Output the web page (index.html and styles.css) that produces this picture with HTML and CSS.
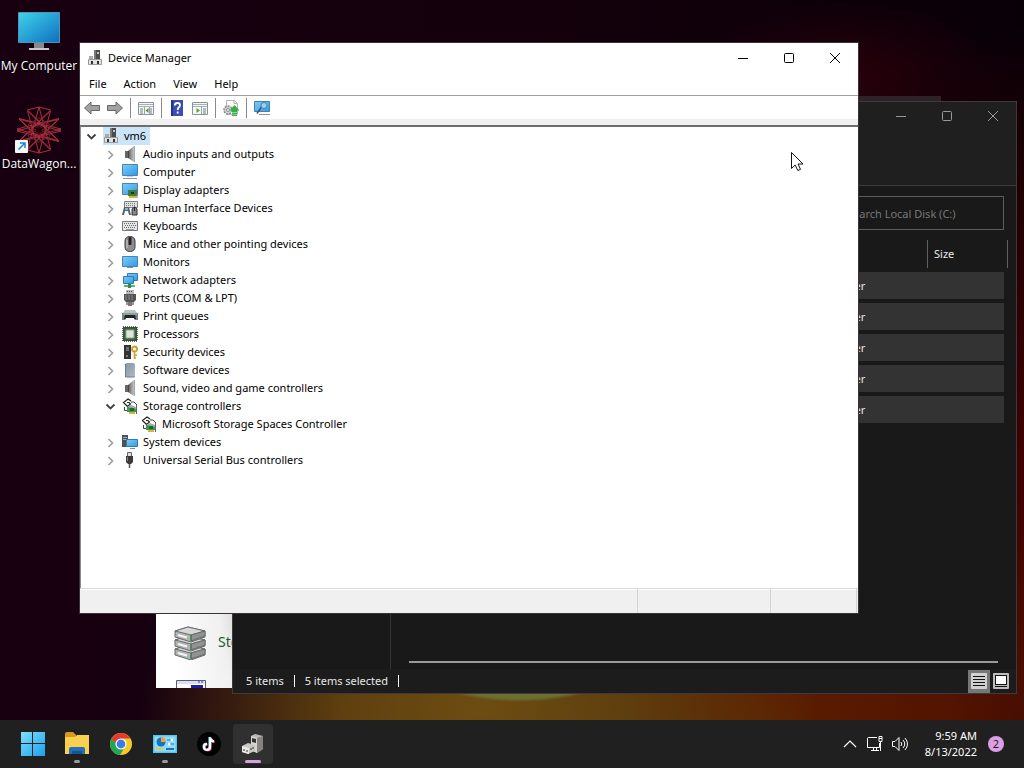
FILE: index.html
```html
<!DOCTYPE html>
<html lang="en">
	<head>
		<meta charset="UTF-8">
		<title>Device Manager</title>
		<link rel="stylesheet" href="styles.css">
	</head>
	<body>
		<svg class="sprite" aria-hidden="true">
			<defs>
				<linearGradient id="screen" x1="0" y1="0" x2="1" y2="1">
					<stop offset="0" stop-color="#7ecbfa"/><stop offset="1" stop-color="#2c9ce8"/>
				</linearGradient>
				<linearGradient id="desk" x1="0" y1="0" x2="1" y2="1">
					<stop offset="0" stop-color="#3fd3ea"/><stop offset="1" stop-color="#0f6fc0"/>
				</linearGradient>
				<linearGradient id="metal" x1="0" y1="0" x2="1" y2="0">
					<stop offset="0" stop-color="#5c5c5c"/><stop offset="1" stop-color="#c4c4c4"/>
				</linearGradient>
				<linearGradient id="tower" x1="0" y1="0" x2="1" y2="1">
					<stop offset="0" stop-color="#8495a1"/><stop offset="1" stop-color="#aebcc6"/>
				</linearGradient>
				<linearGradient id="winblue" x1="0" y1="0" x2="1" y2="1">
					<stop offset="0" stop-color="#7fe0fc"/><stop offset="1" stop-color="#1aa0ec"/>
				</linearGradient>
			</defs>
			<symbol id="i-right" viewBox="0 0 16 16"><path d="M5.500 5l4 4-4 4" fill="none" stroke="#a0a0a0" stroke-width="1.700"/></symbol>
			<symbol id="i-down" viewBox="0 0 16 16"><path d="M3.500 6.500l4 4 4-4" fill="none" stroke="#404040" stroke-width="1.800"/></symbol>
			<symbol id="i-devmgr" viewBox="0 0 16 16">
				<path d="M7 0h6v9H7z" fill="#4a4a4a"/><path d="M7 0h2v9H7z" fill="#777"/><path d="M10 2h2v2h-2z" fill="#c4c4c4"/>
				<path d="M2 6h4v3H2z" fill="#aaa"/>
				<path d="M1.500 9.500h13v5h-13z" fill="#e2e2e2" stroke="#999"/><path d="M4 11h2v3H4zM10 11h2v3h-2z" fill="#333"/>
			</symbol>
			<symbol id="i-audio" viewBox="0 0 16 16">
				<path d="M3 5h3v7H3z" fill="#666"/><path d="M6 5l6-5v16l-6-4z" fill="url(#metal)"/><path d="M6.500 5v7" stroke="#444"/><path d="M12.500 0v16" stroke="#aaa"/>
			</symbol>
			<symbol id="i-computer" viewBox="0 0 16 16">
				<path d="M.5.5h15v11H.5z" fill="url(#screen)" stroke="#4d84ab"/><path d="M5 12.500h6" stroke="#ccc"/><path d="M1 14.500h14" stroke="#8c9aa5"/>
			</symbol>
			<symbol id="i-display" viewBox="0 0 16 16">
				<path d="M.5 1.500h15v11H.5z" fill="url(#screen)" stroke="#4d84ab"/>
				<path d="M6 8h9v6H6z" fill="#3f7d3d"/><path d="M7 14h7v2H7z" fill="#d5b540"/><path d="M9 10h3v2H9z" fill="#20331f"/><path d="M15 7v9" stroke="#707070"/>
			</symbol>
			<symbol id="i-hid" viewBox="0 0 16 16">
				<path d="M2.500 1.500h13v6h-13z" fill="#e1e1e1" stroke="#808080"/><path d="M4 3.500h10M4 5.500h10" stroke="#777" stroke-dasharray="1 1"/>
				<path d="M0 15l2-8h5l2 8H7l-1-4H3l-1 4z" fill="#56646e"/><path d="M3 8h3v2H3z" fill="#6cc0dd"/>
				<path d="M10 15V9q2.500-4 5 0v6z" fill="#888" stroke="#333"/><path d="M12.500 7v4" stroke="#222"/>
			</symbol>
			<symbol id="i-keyboard" viewBox="0 0 16 16">
				<path d="M.5 3.500h15v9H.5z" fill="#e6e6e6" stroke="#7a7a7a"/><path d="M2 5.500h12M3 7.500h11M2 9.500h12" stroke="#6c6c6c" stroke-dasharray="1 1"/><path d="M4 11.500h8" stroke="#999"/>
			</symbol>
			<symbol id="i-mouse" viewBox="0 0 16 16">
				<rect x="3" y=".5" width="10" height="15" rx="4.500" fill="#8e8e8e" stroke="#3b3b3b"/><rect x="6.500" y="1" width="3" height="8" rx="1" fill="#222"/><path d="M5 4v8" stroke="#ccc"/>
			</symbol>
			<symbol id="i-monitor" viewBox="0 0 16 16">
				<path d="M.5 2.500h15v10H.5z" fill="url(#screen)" stroke="#4d84ab"/><path d="M5 13.500h6" stroke="#8a8a8a"/>
			</symbol>
			<symbol id="i-network" viewBox="0 0 16 16">
				<path d="M5.500 1.500h10v7h-10z" fill="url(#screen)" stroke="#3b79a5"/><path d="M1.500 4.500h10v7h-10z" fill="url(#screen)" stroke="#3b79a5"/>
				<path d="M2 13h11v2H2z" fill="#54b968"/><path d="M6 12h3v4H6z" fill="#2f8b48"/>
			</symbol>
			<symbol id="i-port" viewBox="0 0 16 16">
				<path d="M4 0h8v4H4z" fill="#bbb"/><path d="M5 1.500h6" stroke="#555" stroke-dasharray="1 1"/><path d="M2 4h12v6l-2 2H4l-2-2z" fill="#555"/><path d="M4 5v5M7 5v5M10 5v5" stroke="#888"/><path d="M6 12h4v4H6z" fill="#777"/><path d="M5 12v3M11 12v3" stroke="#333"/>
			</symbol>
			<symbol id="i-printer" viewBox="0 0 16 16">
				<path d="M3 2h10l2 3H1z" fill="#b8c4c2"/><path d="M0 5h16v7H0z" fill="#728583"/><path d="M3 7h10l1 4H2z" fill="#222"/><path d="M4 10h8l1 3H3z" fill="#fff"/><path d="M1 6h14" stroke="#a9bab7"/>
			</symbol>
			<symbol id="i-cpu" viewBox="0 0 16 16">
				<path d="M1 1h14v14H1z" fill="#3f5c3f" stroke="#2c432c" stroke-width="1.500" stroke-dasharray="1 1"/><path d="M4 4h8v8H4z" fill="#dfe6dd" stroke="#8ea58b"/>
			</symbol>
			<symbol id="i-security" viewBox="0 0 16 16">
				<path d="M2 1h7v14H2z" fill="#333"/><path d="M4 4h3M4 6h3" stroke="#aaa"/><path d="M4 11h2v2H4z" fill="#777"/>
				<circle cx="12.500" cy="5" r="2.500" fill="none" stroke="#c9a227" stroke-width="1.800"/><path d="M12.500 7v8M12 11h3M12 14h2" stroke="#c9a227" stroke-width="1.500"/>
			</symbol>
			<symbol id="i-software" viewBox="0 0 16 16">
				<path d="M3 2l2-1h7l1 2v12H3z" fill="url(#tower)"/><path d="M3.500 2v13h9" fill="none" stroke="#6b7c88"/>
			</symbol>
			<symbol id="i-storage" viewBox="0 0 16 16">
				<path d="M9 3L6 1 1.500 4.500 5.500 8.500 8.500 6 7 4.500H5" fill="none" stroke="#222" stroke-width="1.200"/>
				<path d="M2.500 9v3.500H5M9 4h3l3 3" fill="none" stroke="#444"/>
				<path d="M5 9h9v5H5z" fill="#3e9850"/><path d="M5 9l4-2 5 2v2z" fill="#9ab0a4"/><path d="M8 10h4v3H8z" fill="#1f6a30"/><path d="M7 14h6v2H7z" fill="#d5b540"/><path d="M14.500 7v9" stroke="#666"/>
			</symbol>
			<symbol id="i-system" viewBox="0 0 16 16">
				<path d="M0 1h6v12H0z" fill="#4a535a"/><path d="M1 3.500h4M1 5.500h4" stroke="#aab"/><path d="M4.500 5.500h11v7h-11z" fill="url(#screen)" stroke="#3b79a5"/><path d="M8 14.500h5" stroke="#8a8a8a"/>
			</symbol>
			<symbol id="i-usb" viewBox="0 0 16 16">
				<path d="M5.500.5h4v4h-4z" fill="#ddd" stroke="#666"/><path d="M4 4h7v6l-2 2H6l-2-2z" fill="#3a3a3a"/><path d="M5.500 5v4" stroke="#888"/><path d="M7.500 12v4" stroke="#555" stroke-width="1.500"/>
			</symbol>
			<symbol id="i-min" viewBox="0 0 12 12"><path d="M1 6.500h10" stroke="currentColor"/></symbol>
			<symbol id="i-max" viewBox="0 0 12 12"><rect x="1.500" y="1.500" width="9" height="9" rx="1" fill="none" stroke="currentColor"/></symbol>
			<symbol id="i-close" viewBox="0 0 12 12"><path d="M1 1l10 10M11 1L1 11" stroke="currentColor"/></symbol>
		</svg>

		<main class="desktop">
			<a class="shortcut" href="#">
				<svg class="shortcut-icon" viewBox="0 0 48 48">
					<path d="M3.500 4.500h41v30h-41z" fill="url(#desk)" stroke="#5195b5"/>
					<path d="M19 35h10v5H19z" fill="#87898c"/><path d="M14 40h20v2H14z" fill="#c9c9c9"/>
				</svg>
				<span>My Computer</span>
			</a>
			<a class="shortcut" href="#">
				<svg class="shortcut-icon" viewBox="0 0 48 48">
					<g fill="none" stroke="#a8323c">
						<g id="star"><path d="M24 1L35.500 43 4 12.500 46 23 4 35 35.500 4z"/><path d="M24 1L12.500 43 44 12.500 2 23 44 35 12.500 4z"/></g>
						<use href="#star" transform="rotate(180 24 24)"/>
					</g>
					<g fill="none" stroke="#7c1f2c">
						<circle cx="24" cy="17" r="5"/><circle cx="30" cy="21" r="5"/><circle cx="30" cy="28" r="5"/><circle cx="24" cy="31" r="5"/><circle cx="18" cy="28" r="5"/><circle cx="18" cy="21" r="5"/>
					</g>
					<circle cx="24" cy="24" r="3" fill="#210008"/>
					<rect x="0" y="34" width="13" height="13" rx="1" fill="#f8f8f8"/>
					<path d="M3.500 43.500l6-6M5 37h5v5" fill="none" stroke="#1784d8" stroke-width="1.500"/>
				</svg>
				<span>DataWagon...</span>
			</a>

			<section class="window panel" aria-label="Control Panel">
				<div class="panel-title"></div>
				<div class="panel-body">
					<a class="panel-item" href="#">
						<svg class="panel-icon" viewBox="0 0 36 36">
							<g id="drive" fill="#b0b4b2" stroke="#666b69">
								<path d="M2 25l13-4 17 4v6l-14 5-16-5z"/><path d="M2 25l16 4 14-4-17-4z" fill="#d6d8d7"/><path d="M18 29v6l14-5v-5z" fill="#8f9391"/><path d="M18 29v6" stroke="#3b7a40"/><path d="M5 29l9 2.500" stroke="#f4f4f4" stroke-width="2"/>
							</g>
							<use href="#drive" y="-9"/><use href="#drive" y="-18"/>
						</svg>
						<span>Storage Spaces</span>
					</a>
					<a class="panel-item" href="#" aria-label="Taskbar">
						<svg class="panel-icon" viewBox="0 0 36 36">
							<path d="M3.500 4.500h29v26h-29z" fill="#fff" stroke="#555b80"/><path d="M4 5h28v3H4z" fill="#dcdeea"/><path d="M18 9h12v12H18z" fill="#1e1ea0"/><path d="M26 5v2M29 5v2" stroke="#445"/>
						</svg>
					</a>
				</div>
			</section>

			<section class="window explorer" aria-label="Local Disk (C:)">
				<header class="explorer-top">
					<div class="win-buttons">
						<button aria-label="Minimize"><svg><use href="#i-min"/></svg></button>
						<button aria-label="Maximize"><svg><use href="#i-max"/></svg></button>
						<button aria-label="Close"><svg><use href="#i-close"/></svg></button>
					</div>
				</header>
				<div class="explorer-search">
					<input type="search" placeholder="Search Local Disk (C:)" aria-label="Search Local Disk (C:)">
				</div>
				<div class="explorer-main">
					<nav class="explorer-nav"></nav>
					<div class="explorer-list">
						<table>
							<thead>
								<tr><th></th><th class="col-type"></th><th class="col-size">Size</th></tr>
							</thead>
							<tbody>
								<tr><td></td><td>File folder</td><td></td></tr>
								<tr><td></td><td>File folder</td><td></td></tr>
								<tr><td></td><td>File folder</td><td></td></tr>
								<tr><td></td><td>File folder</td><td></td></tr>
								<tr><td></td><td>File folder</td><td></td></tr>
							</tbody>
						</table>
						<div class="scrollbar"></div>
					</div>
				</div>
				<footer class="explorer-status">
					<span class="count">5 items</span>
					<span class="count">5 items selected</span>
					<div class="views">
						<button class="view active" aria-label="Details">
							<svg viewBox="0 0 16 16"><rect width="16" height="16" rx="1" fill="#d0d0d0"/><path d="M2 3.500h12M2 6.500h12M2 9.500h12M2 12.500h12" stroke="#111"/></svg>
						</button>
						<button class="view" aria-label="Large icons">
							<svg viewBox="0 0 16 16"><rect width="16" height="16" rx="1" fill="#bcbcbc"/><rect x="2.500" y="2.500" width="11" height="9" fill="#fff" stroke="#111"/><path d="M2 13.500h12" stroke="#111"/></svg>
						</button>
					</div>
				</footer>
			</section>

			<section class="window devmgr" aria-label="Device Manager">
				<header class="titlebar">
					<svg class="icon"><use href="#i-devmgr"/></svg>
					<h1>Device Manager</h1>
					<div class="win-buttons">
						<button aria-label="Minimize"><svg><use href="#i-min"/></svg></button>
						<button aria-label="Maximize"><svg><use href="#i-max"/></svg></button>
						<button aria-label="Close"><svg><use href="#i-close"/></svg></button>
					</div>
				</header>
				<nav class="menubar">
					<button>File</button><button>Action</button><button>View</button><button>Help</button>
				</nav>
				<div class="toolbar">
					<button aria-label="Back"><svg viewBox="0 0 18 18"><path d="M1.500 9L8 3v3.500h8.500v5H8V15z" fill="#a2a2a2" stroke="#666"/></svg></button>
					<button aria-label="Forward"><svg viewBox="0 0 18 18"><path d="M16.500 9L10 3v3.500H1.500v5H10V15z" fill="#a2a2a2" stroke="#666"/></svg></button>
					<span class="sep"></span>
					<button aria-label="Show console tree"><svg viewBox="0 0 18 18">
						<path d="M1.500 3.500h15v12h-15z" fill="#f7f8f6" stroke="#89939a"/><path d="M2 5.500h14M2 7.500h14" stroke="#a7b2b8"/><path d="M3 10h3M3 12h3M3 14h3M13 10h2M13 12h2M13 14h2" stroke="#6f8089"/><path d="M7.500 8v7M12.500 8v7" stroke="#9aa5ab"/><path d="M11.500 9v5L8.500 11.500z" fill="#5b8f3a"/>
					</svg></button>
					<span class="sep"></span>
					<button aria-label="Help"><svg viewBox="0 0 18 18">
						<path d="M3 1h12v16H3z" fill="#3b4eb4"/><path d="M3 1h2v16H3z" fill="#24347f"/><path d="M6.800 6.500q.2-2.500 2.700-2.500t2.500 2.200q0 1.300-1.300 2.300-1 .8-1 2.500M9.700 12.500v2" fill="none" stroke="#fff" stroke-width="1.800"/>
					</svg></button>
					<button aria-label="Properties"><svg viewBox="0 0 18 18">
						<path d="M1.500 3.500h15v12h-15z" fill="#f7f8f6" stroke="#89939a"/><path d="M2 5.500h14M2 7.500h14" stroke="#a7b2b8"/><path d="M10.500 8v7" stroke="#9aa5ab"/><path d="M12 10h3M12 12h3M12 14h3" stroke="#6f8089"/><path d="M5.500 9v5L9 11.500z" fill="#5b9f3a"/>
					</svg></button>
					<span class="sep"></span>
					<button aria-label="Scan for hardware changes"><svg viewBox="0 0 18 18">
						<path d="M4.500 1.500h8l3 3v11h-11z" fill="#fbfbfb" stroke="#b5b5b5"/><path d="M12 1.500v3h3" fill="none" stroke="#b5b5b5"/>
						<circle cx="6" cy="11" r="4" fill="#d3d3d3" stroke="#888" stroke-width="1.500" stroke-dasharray="2 1"/><circle cx="6" cy="11" r="1.500" fill="#fff" stroke="#888"/>
						<path d="M12.500 6l5 5.500h-2.500v2h-5v-2H7.500z" fill="#2fb043"/><path d="M10 14.500h5M10 16.500h5" stroke="#2fb043"/>
					</svg></button>
					<span class="sep"></span>
					<button aria-label="Add legacy hardware"><svg viewBox="0 0 18 18">
						<path d="M1.500 2.500h15v10h-15z" fill="url(#screen)" stroke="#467fa8"/><path d="M8.500 8l-4.500 6.500" fill="none" stroke="#456" stroke-width="1.500"/><circle cx="11" cy="6.500" r="3" fill="#8dd3fa" stroke="#57809c"/><path d="M6 15.500h11" stroke="#8b949b"/>
					</svg></button>
				</div>
				<div class="tree">
					<ul>
						<li>
							<div class="node">
								<button class="toggle" aria-label="Collapse"><svg class="icon"><use href="#i-down"/></svg></button>
								<span class="item selected"><svg class="icon"><use href="#i-devmgr"/></svg>vm6</span>
							</div>
							<ul>
								<li class="node"><button class="toggle" aria-label="Expand"><svg class="icon"><use href="#i-right"/></svg></button><span class="item"><svg class="icon"><use href="#i-audio"/></svg>Audio inputs and outputs</span></li>
								<li class="node"><button class="toggle" aria-label="Expand"><svg class="icon"><use href="#i-right"/></svg></button><span class="item"><svg class="icon"><use href="#i-computer"/></svg>Computer</span></li>
								<li class="node"><button class="toggle" aria-label="Expand"><svg class="icon"><use href="#i-right"/></svg></button><span class="item"><svg class="icon"><use href="#i-display"/></svg>Display adapters</span></li>
								<li class="node"><button class="toggle" aria-label="Expand"><svg class="icon"><use href="#i-right"/></svg></button><span class="item"><svg class="icon"><use href="#i-hid"/></svg>Human Interface Devices</span></li>
								<li class="node"><button class="toggle" aria-label="Expand"><svg class="icon"><use href="#i-right"/></svg></button><span class="item"><svg class="icon"><use href="#i-keyboard"/></svg>Keyboards</span></li>
								<li class="node"><button class="toggle" aria-label="Expand"><svg class="icon"><use href="#i-right"/></svg></button><span class="item"><svg class="icon"><use href="#i-mouse"/></svg>Mice and other pointing devices</span></li>
								<li class="node"><button class="toggle" aria-label="Expand"><svg class="icon"><use href="#i-right"/></svg></button><span class="item"><svg class="icon"><use href="#i-monitor"/></svg>Monitors</span></li>
								<li class="node"><button class="toggle" aria-label="Expand"><svg class="icon"><use href="#i-right"/></svg></button><span class="item"><svg class="icon"><use href="#i-network"/></svg>Network adapters</span></li>
								<li class="node"><button class="toggle" aria-label="Expand"><svg class="icon"><use href="#i-right"/></svg></button><span class="item"><svg class="icon"><use href="#i-port"/></svg>Ports (COM &amp; LPT)</span></li>
								<li class="node"><button class="toggle" aria-label="Expand"><svg class="icon"><use href="#i-right"/></svg></button><span class="item"><svg class="icon"><use href="#i-printer"/></svg>Print queues</span></li>
								<li class="node"><button class="toggle" aria-label="Expand"><svg class="icon"><use href="#i-right"/></svg></button><span class="item"><svg class="icon"><use href="#i-cpu"/></svg>Processors</span></li>
								<li class="node"><button class="toggle" aria-label="Expand"><svg class="icon"><use href="#i-right"/></svg></button><span class="item"><svg class="icon"><use href="#i-security"/></svg>Security devices</span></li>
								<li class="node"><button class="toggle" aria-label="Expand"><svg class="icon"><use href="#i-right"/></svg></button><span class="item"><svg class="icon"><use href="#i-software"/></svg>Software devices</span></li>
								<li class="node"><button class="toggle" aria-label="Expand"><svg class="icon"><use href="#i-right"/></svg></button><span class="item"><svg class="icon"><use href="#i-audio"/></svg>Sound, video and game controllers</span></li>
								<li>
									<div class="node"><button class="toggle" aria-label="Collapse"><svg class="icon"><use href="#i-down"/></svg></button><span class="item"><svg class="icon"><use href="#i-storage"/></svg>Storage controllers</span></div>
									<ul>
										<li class="node leaf"><span class="item"><svg class="icon"><use href="#i-storage"/></svg>Microsoft Storage Spaces Controller</span></li>
									</ul>
								</li>
								<li class="node"><button class="toggle" aria-label="Expand"><svg class="icon"><use href="#i-right"/></svg></button><span class="item"><svg class="icon"><use href="#i-system"/></svg>System devices</span></li>
								<li class="node"><button class="toggle" aria-label="Expand"><svg class="icon"><use href="#i-right"/></svg></button><span class="item"><svg class="icon"><use href="#i-usb"/></svg>Universal Serial Bus controllers</span></li>
							</ul>
						</li>
					</ul>
				</div>
				<footer class="statusbar"><span></span><span></span><span></span></footer>
			</section>

			<svg class="cursor" viewBox="0 0 13 20"><path d="M.5.5v16l3.700-3.500 2.600 5.500 2.700-1.200L7 12h5z" fill="#fff" stroke="#111"/></svg>
		</main>

		<footer class="taskbar">
			<div class="apps">
				<button class="app" aria-label="Start"><svg viewBox="0 0 24 24"><path d="M0 0h11v11H0zM12 0h12v11H12zM0 12h11v12H0zM12 12h12v12H12z" fill="url(#winblue)"/></svg></button>
				<button class="app open" aria-label="File Explorer"><svg viewBox="0 0 24 24">
					<path d="M0 2q0-2 2-2h6l3 3v5H0z" fill="#d99a1c"/><path d="M0 5h10l2-2h12v19H0z" fill="#fbd04e"/><path d="M4 22v-5q0-2 2-2h12q2 0 2 2v5z" fill="#2270b8"/><path d="M7 19h10v3H7z" fill="#155594"/>
				</svg></button>
				<button class="app" aria-label="Chrome"><svg viewBox="0 0 24 24">
					<circle cx="12" cy="12" r="11" fill="#f9c922"/><path d="M2.500 6.500A11 11 0 0 0 11 23l5.500-9H8z" fill="#23a455"/><path d="M2.500 6.500L8 15l4-8.500z" fill="#23a455"/><path d="M2.500 6.500A11 11 0 0 1 21.500 6.500H12L8 12z" fill="#e33b2e"/><circle cx="12" cy="12" r="5.600" fill="#fff"/><circle cx="12" cy="12" r="4.400" fill="#3b7de8"/>
				</svg></button>
				<button class="app open" aria-label="Control Panel"><svg viewBox="0 0 24 24">
					<path d="M0 3h24v18H0z" fill="#58c3ee"/><path d="M1.500 4.500h21v15h-21z" fill="#8edcf8"/><circle cx="8" cy="10" r="4.500" fill="#1772c4"/><path d="M8 10V5a5 5 0 0 1 5 5z" fill="#f0a13c"/><path d="M14 8h7M14 12h7" stroke="#1772c4"/><circle cx="19" cy="8" r="1.500" fill="#fff"/><circle cx="16" cy="12" r="1.500" fill="#fff"/><path d="M3 17h7" stroke="#e9c34b" stroke-width="2"/><path d="M13 17h8" stroke="#1772c4" stroke-width="2"/>
				</svg></button>
				<button class="app" aria-label="TikTok"><svg viewBox="0 0 24 24">
					<circle cx="12" cy="12" r="12" fill="#000"/>
					<g fill="none" stroke-width="2.200"><path d="M12.500 5v9.500a3 3 0 1 1-3-3M12.500 5q.5 3.500 4 4" stroke="#25e4df"/><path d="M13.700 6v9.500a3 3 0 1 1-3-3M13.700 6q.5 3.500 4 4" stroke="#f5305a"/><path d="M13 5.500V15a3 3 0 1 1-3-3M13 5.500q.5 3.500 4 4" stroke="#fff"/></g>
				</svg></button>
				<button class="app open active" aria-label="Device Manager"><svg viewBox="0 0 24 24">
					<path d="M10 4l4-2 8 2v13l-6 4-6-3z" fill="#b9b7b2"/><path d="M10 4l6 2v15l-6-3z" fill="#d8d6d0"/><path d="M16 6l6-2v13l-6 4z" fill="#85837f"/><path d="M11 6l4 1v4l-4-1z" fill="#333"/>
					<path d="M1 14l6-3 7 2v6l-7 3-6-2z" fill="#c9c7c2"/><path d="M1 14l7 2v6l-7-2z" fill="#eae8e4"/><path d="M3 17v2M6 18v2M10 16v2M12 15v2" stroke="#333"/>
				</svg></button>
			</div>
			<div class="tray">
				<button aria-label="Show hidden icons"><svg class="tray-icon" viewBox="0 0 18 18"><path d="M3 12l6-6 6 6" fill="none" stroke="#fff" stroke-width="1.200"/></svg></button>
				<button aria-label="Network"><svg class="tray-icon" viewBox="0 0 18 18"><g fill="none" stroke="#fff"><path d="M11 2.500H2.500q-1 0-1 1v9h12V8M5 15.500h8M7.500 13v2M10.500 13v2"/><path d="M13 1.500h3v5h-3zM13 3.500h3M14.500 7v9"/></g></svg></button>
				<button aria-label="Volume"><svg class="tray-icon" viewBox="0 0 18 18"><g fill="none" stroke="#fff"><path d="M1.500 6.500H4l4-4v13l-4-4H1.500z"/><path d="M10 7q1.500 2 0 4M12 5q3.500 4 0 8M14 3q5 6 0 12"/></g></svg></button>
				<div class="clock"><time>9:59 AM</time><time>8/13/2022</time></div>
				<span class="badge">2</span>
			</div>
		</footer>
	</body>
</html>
```
FILE: styles.css
```css
*{padding:0;margin:0;box-sizing:border-box;}
body{display:flex;flex-direction:column;min-height:100vh;font:11px/16px "Noto Sans","Open Sans",sans-serif;color:#000;background:#12000c;overflow:hidden;}
button,input{font:inherit;color:inherit;border:0;background:none;}
a{color:inherit;text-decoration:none;}
ul{list-style:none;}
svg{display:block;}
.sprite{position:absolute;width:0;height:0;}
.icon{width:16px;height:16px;flex:none;}

/* desktop */
.desktop{
	position:relative;
	flex:1;
	display:flex;
	flex-direction:column;
	align-items:flex-start;
	gap:32px;
	padding-top:8px;
	background:
		radial-gradient(ellipse 130px 60px at 519px 642px,#6b7030 0 94%,transparent 100%),
		radial-gradient(ellipse 340px 200px at 480px 710px,#6e4d12,#5f400f 40%,transparent),
		radial-gradient(ellipse 440px 280px at 760px 720px,#5c1e00,#521300 45%,transparent),
		radial-gradient(ellipse 260px 480px at 1060px 500px,#480200,transparent),
		radial-gradient(ellipse 160px 80px at 850px 80px,#28000a,transparent),
		linear-gradient(90deg,#180011,#14000c 50%,#090007);
}
.shortcut{display:flex;flex-direction:column;align-items:center;gap:2px;width:78px;font-size:12px;font-family:"Open Sans",sans-serif;color:#fff;text-shadow:0 1px 2px #000;white-space:nowrap;}
.shortcut-icon{width:48px;height:48px;}

/* windows */
.window{position:absolute;display:flex;flex-direction:column;}
.win-buttons{display:flex;margin-left:auto;}
.win-buttons button{width:46px;height:28px;display:flex;align-items:center;justify-content:center;}
.win-buttons svg{width:12px;height:12px;}

.panel{left:156px;top:96px;width:785px;height:592px;overflow:hidden;}
.panel-title{height:30px;background:#2b2328;}
.panel-body{flex:1;display:flex;flex-direction:column;justify-content:flex-end;gap:16px;margin-bottom:-24px;padding-left:17px;background:linear-gradient(80deg,#fff 3%,#f0f0f0 9%,#999 17%);}
.panel-item{display:flex;align-items:center;gap:9px;font-size:14px;color:#1e5a30;}
.panel-icon{width:36px;height:36px;}

.explorer{left:232px;top:101px;width:785px;height:593px;color:#e8e8e8;background:#191919;border:1px solid #40383a;}
.explorer-top{display:flex;align-items:flex-start;height:84px;flex:none;background:#1f1f1f;border-bottom:1px solid #43383a;color:#999;}
.explorer-search{display:flex;justify-content:flex-end;padding:10px 12px;}
.explorer-search input{width:180px;height:34px;padding-left:22px;border:1px solid #5c5c5c;color:#777;}
.explorer-search input::placeholder{color:#777;opacity:1;}
.explorer-main{flex:1;display:flex;}
.explorer-nav{width:158px;border-right:1px solid #333;}
.explorer-list{flex:1;display:flex;flex-direction:column;padding:0 8px 6px 18px;}
.explorer-list table{width:100%;border-spacing:0 4px;table-layout:fixed;margin-top:-4px;}
.explorer-list th{height:28px;padding-left:6px;text-align:left;font-weight:normal;border-right:1px solid #606060;}
.explorer-list th:first-child{border:0;}
.col-type{width:124px;}
.col-size{width:80px;}
.explorer-list td{height:27px;padding-left:10px;background:#333;}
.explorer-list td:last-child{border-right:4px solid #191919;}
.scrollbar{height:2px;margin:auto 10px 0 0;background:#999;}
.explorer-status{display:flex;align-items:center;height:24px;padding:0 4px 0 13px;background:#1c1c1c;}
.count{margin-right:10px;padding-right:10px;border-right:1px solid #fff;line-height:12px;}
.views{display:flex;align-items:center;margin-left:auto;}
.view{width:22px;height:23px;display:flex;align-items:center;justify-content:center;}
.view.active{background:#777;}
.view svg{width:16px;height:16px;}

.devmgr{left:79px;top:42px;width:780px;height:572px;background:#fff;border:1px solid #3a3236;}
.titlebar{display:flex;align-items:center;height:30px;padding-left:7px;}
.titlebar h1{margin-left:5px;font-size:11px;font-weight:normal;}
.menubar{display:flex;gap:1px;height:23px;padding-left:1px;border-bottom:1px solid #a0a0a0;}
.menubar button{padding:0 8px;}
.toolbar{display:flex;align-items:center;gap:5px;height:29px;padding:0 3px;border-bottom:6px solid #f0f0f0;}
.toolbar button,.toolbar svg{width:18px;height:18px;}
.toolbar .sep{width:1px;height:20px;margin:0 1px;background:#8a8a8a;}
.tree{flex:1;padding:0 3px;border-top:2px solid #6e6e6e;border-left:1px solid #8a8a8a;}
.tree ul ul{padding-left:19px;}
.node{display:flex;align-items:center;gap:3px;height:18px;}
.node.leaf{padding-left:19px;}
.toggle{width:16px;height:16px;}
.item{display:flex;align-items:center;gap:5px;height:18px;padding-right:4px;white-space:nowrap;}
.item.selected{background:#cce4f7;}
.statusbar{display:flex;height:25px;padding-right:1px;background:#f0f0f0;border-top:1px solid #d8d8d8;box-shadow:inset 0 1px #fff;}
.statusbar span{border-right:1px solid #d4d4d4;width:133px;}
.statusbar span:first-child{flex:1;}
.statusbar span:last-child{width:86px;}

.cursor{position:absolute;left:791px;top:152px;width:13px;height:20px;}

/* taskbar */
.taskbar{display:flex;justify-content:space-between;height:48px;padding:0 20px 0 11px;color:#fff;background:#202020;}
.apps,.tray{display:flex;align-items:center;}
.app{position:relative;width:40px;height:40px;margin:0 2px;display:flex;align-items:center;justify-content:center;border-radius:4px;}
.app svg{width:24px;height:24px;}
.app.active{background:#303030;}
.app.open::after{content:"";position:absolute;bottom:1px;left:17px;width:6px;height:3px;border-radius:2px;background:#999;}
.app.active::after{left:12px;width:16px;background:#d3a6da;}
.tray{gap:7px;}
.tray-icon{width:18px;height:18px;}
.clock{display:flex;flex-direction:column;text-align:right;margin:0 4px 0 9px;}
.badge{width:16px;height:16px;border-radius:8px;background:#dc9fe6;color:#222;text-align:center;}
```
